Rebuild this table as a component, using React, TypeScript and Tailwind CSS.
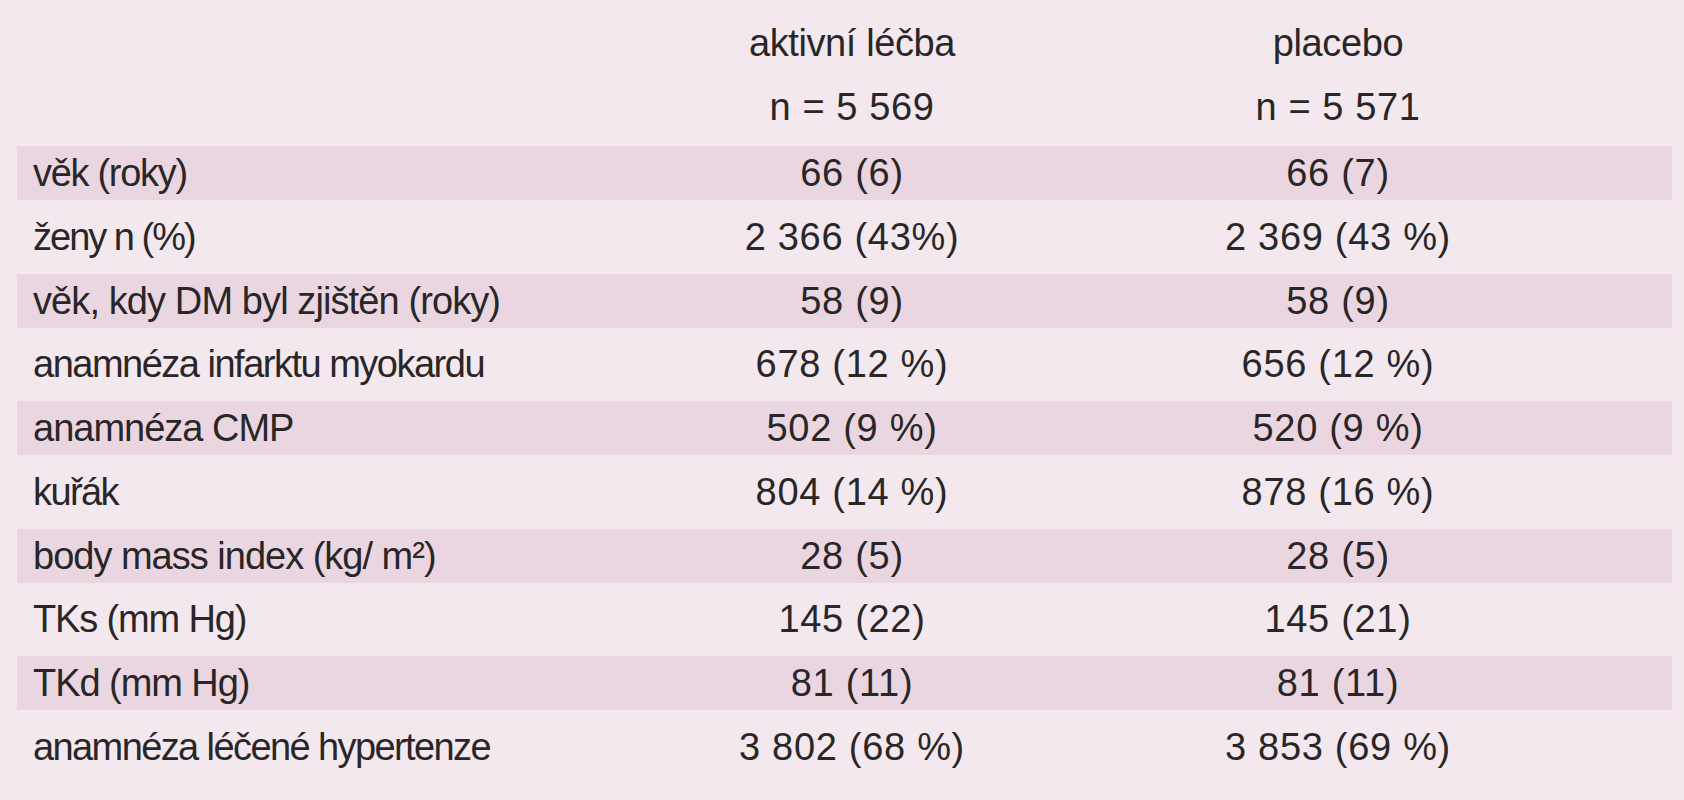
import React from "react";

type Row = { label: string; active: string; placebo: string; track: string };

// tracking per label so the widths follow the original typesetting
const rows: Row[] = [
    { label: "věk (roky)", active: "66 (6)", placebo: "66 (7)", track: "tracking-[-1.3px]" },
    { label: "ženy n (%)", active: "2 366 (43%)", placebo: "2 369 (43 %)", track: "tracking-[-2px]" },
    { label: "věk, kdy DM byl zjištěn (roky)", active: "58 (9)", placebo: "58 (9)", track: "tracking-[-0.9px]" },
    { label: "anamnéza infarktu myokardu", active: "678 (12 %)", placebo: "656 (12 %)", track: "tracking-[-1.5px]" },
    { label: "anamnéza CMP", active: "502 (9 %)", placebo: "520 (9 %)", track: "tracking-[-1px]" },
    { label: "kuřák", active: "804 (14 %)", placebo: "878 (16 %)", track: "tracking-[-1.6px]" },
    { label: "body mass index (kg/ m²)", active: "28 (5)", placebo: "28 (5)", track: "tracking-[-1px]" },
    { label: "TKs (mm Hg)", active: "145 (22)", placebo: "145 (21)", track: "tracking-[-1.15px]" },
    { label: "TKd (mm Hg)", active: "81 (11)", placebo: "81 (11)", track: "tracking-[-1.05px]" },
    { label: "anamnéza léčené hypertenze", active: "3 802 (68 %)", placebo: "3 853 (69 %)", track: "tracking-[-1.6px]" },
];

export default function App() {
    return (
        <main
            className="min-h-screen w-[1684px] h-[800px] overflow-hidden bg-[#f3e8ed] text-[#2a2628] text-[38px]"
            style={{ fontFamily: '"Liberation Sans", Arial, sans-serif' }}
        >
            <div className="pl-[17px] pr-[12px] pt-[12px]">
                {/* Header */}
                <div className="grid grid-cols-[592px_486px_486px_1fr] leading-[63.5px] mb-[7px]">
                    <div />
                    <div className="text-center">
                        <div className="tracking-[-0.4px]">aktivní léčba</div>
                        <div className="tracking-[0.6px]">n = 5 569</div>
                    </div>
                    <div className="text-center">
                        <div className="tracking-[-0.4px]">placebo</div>
                        <div className="tracking-[0.6px]">n = 5 571</div>
                    </div>
                    <div />
                </div>

                {/* Rows */}
                <div className="flex flex-col gap-[9.75px]">
                    {rows.map((row, i) => (
                        <div
                            key={row.label}
                            className={
                                i % 2 === 0
                                    ? "grid grid-cols-[592px_486px_486px_1fr] h-[54px] leading-[54px] bg-[#e9d6e0]"
                                    : "grid grid-cols-[592px_486px_486px_1fr] h-[54px] leading-[54px]"
                            }
                        >
                            <div className={"pl-[16px] whitespace-nowrap " + row.track}>{row.label}</div>
                            <div className="text-center whitespace-nowrap tracking-[0.7px]">{row.active}</div>
                            <div className="text-center whitespace-nowrap tracking-[0.7px]">{row.placebo}</div>
                            <div />
                        </div>
                    ))}
                </div>
            </div>
        </main>
    );
}
